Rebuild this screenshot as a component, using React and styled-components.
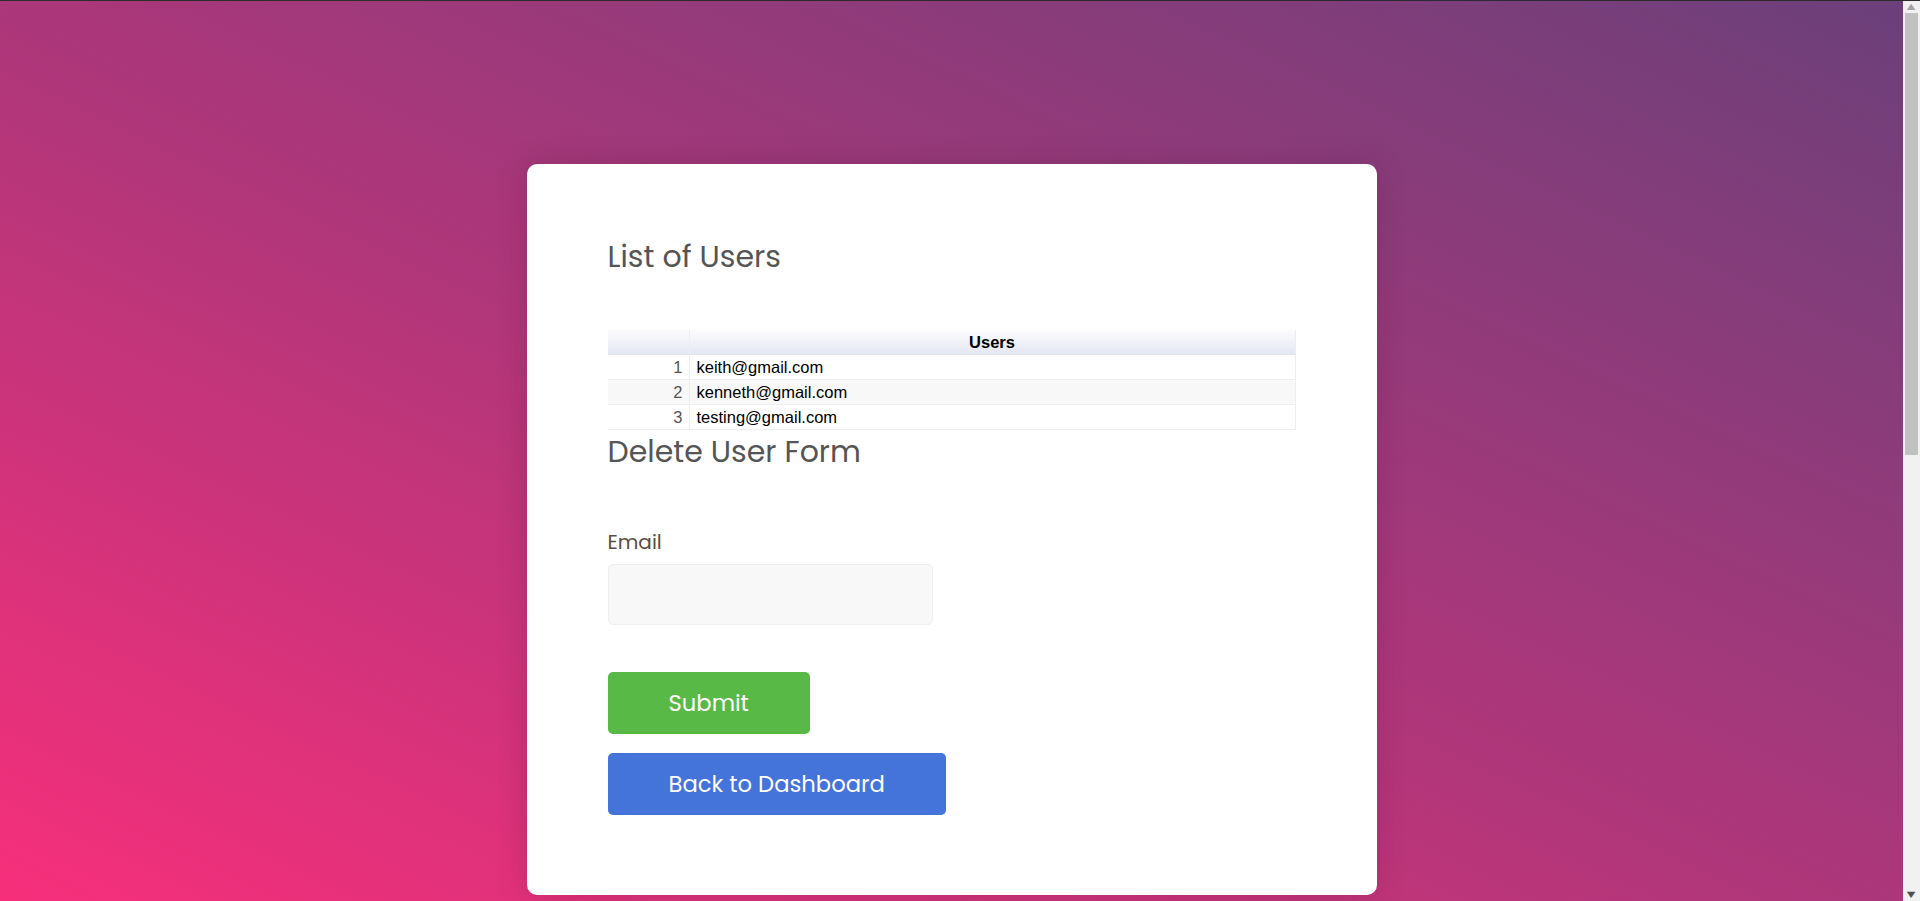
import React from 'react';
import styled, { createGlobalStyle } from 'styled-components';

const users = ['keith@gmail.com', 'kenneth@gmail.com', 'testing@gmail.com'];

const App = () => {
  return (
    <>
      <GlobalStyle />
      <Page>
        <Card>
          {/* 사용자 목록 */}
          <Heading>List of Users</Heading>
          <UserTable>
            <thead>
              <tr>
                <HeadCell />
                <HeadCell>Users</HeadCell>
              </tr>
            </thead>
            <tbody>
              {users.map((email, i) => (
                <Row key={email} striped={i % 2 === 1}>
                  <IndexCell>{i + 1}</IndexCell>
                  <EmailCell>{email}</EmailCell>
                </Row>
              ))}
            </tbody>
          </UserTable>

          {/* 삭제 폼 */}
          <FormHeading>Delete User Form</FormHeading>
          <Form onSubmit={e => e.preventDefault()}>
            <Label htmlFor="email">Email</Label>
            <Input id="email" type="email" />
            <Button type="submit" color="#58b947">Submit</Button>
            <Button type="button" color="#4474d9">Back to Dashboard</Button>
          </Form>
        </Card>
      </Page>

      {/* 스크롤바 */}
      <ScrollTrack>
        <ScrollArrow>▲</ScrollArrow>
        <ScrollThumb />
        <ScrollArrow down>▼</ScrollArrow>
      </ScrollTrack>
    </>
  );
};

export default App;

const GlobalStyle = createGlobalStyle`
  html, body {
    margin: 0;
    padding: 0;
  }
  html {
    scrollbar-width: none;
  }
  body {
    border-top: 1px solid #2b2b2b;
    background: linear-gradient(to top right, #f72f7b 0%, #b2367a 45%, #6b407a 100%) fixed;
    font-family: 'Poppins', 'Inter', 'Noto Sans', sans-serif;
  }
`;

const Page = styled.div`
  display: flex;
  justify-content: center;
  padding: 163px 17px 873px 0;
`;

const Card = styled.div`
  width: 850px;
  box-sizing: border-box;
  padding: 72px 81px 80px;
  background-color: #fff;
  border-radius: 10px;
  box-shadow: 0 0 30px rgba(60, 0, 40, 0.18);
`;

const Heading = styled.h2`
  margin: 0 0 52px;
  font-size: 30px;
  font-weight: 400;
  line-height: 42px;
  color: #555;
`;

const FormHeading = styled(Heading)`
  margin: 1px 0 56px;
`;

const UserTable = styled.table`
  width: 100%;
  border-collapse: collapse;
  font-family: 'Liberation Sans', Arial, sans-serif;
  font-size: 16.5px;
`;

const HeadCell = styled.th`
  height: 24px;
  padding: 0;
  font-weight: bold;
  color: #000;
  background: linear-gradient(to bottom, #fcfcfe 0%, #e3e7f2 100%);
  border-right: 1px solid #eee;
  border-bottom: 1px solid #e6e6e6;

  &:first-child {
    width: 81px;
  }
`;

const Row = styled.tr`
  background-color: ${({ striped }) => (striped ? '#f8f8f8' : '#fff')};
`;

const IndexCell = styled.td`
  height: 24px;
  padding: 0 6px 0 0;
  text-align: right;
  color: #555;
  border-right: 1px solid #eee;
  border-bottom: 1px solid #eee;
`;

const EmailCell = styled.td`
  padding: 0 0 0 7px;
  color: #000;
  border-right: 1px solid #eee;
  border-bottom: 1px solid #eee;
`;

const Form = styled.form`
  display: flex;
  flex-direction: column;
  align-items: flex-start;
`;

const Label = styled.label`
  font-size: 20px;
  line-height: 26px;
  color: #5a4d43;
  margin-bottom: 9px;
`;

const Input = styled.input`
  width: 325px;
  height: 61px;
  box-sizing: border-box;
  background-color: #f8f8f8;
  border: 1px solid #efefef;
  border-radius: 5px;
  outline: none;
  margin-bottom: 47px;
`;

const Button = styled.button`
  height: 62px;
  padding: 0 61px;
  border: none;
  border-radius: 5px;
  background-color: ${({ color }) => color};
  color: #fff;
  font-family: inherit;
  font-size: 22.7px;
  cursor: pointer;

  & + & {
    margin-top: 19px;
  }
`;

const ScrollTrack = styled.div`
  position: fixed;
  top: 1px;
  right: 0;
  bottom: 0;
  width: 17px;
  display: flex;
  flex-direction: column;
  align-items: center;
  background-color: #f1f1f1;
`;

const ScrollArrow = styled.div`
  height: 12px;
  margin-top: ${({ down }) => (down ? 'auto' : '0')};
  font-family: 'DejaVu Sans', sans-serif;
  font-size: 8px;
  line-height: 12px;
  color: ${({ down }) => (down ? '#505050' : '#a3a3a3')};
  transform: scaleX(1.4);
`;

const ScrollThumb = styled.div`
  width: 17px;
  box-sizing: border-box;
  border: 0 solid #f1f1f1;
  border-width: 0 2px;
  height: 442px;
  background-color: #c1c1c1;
`;
